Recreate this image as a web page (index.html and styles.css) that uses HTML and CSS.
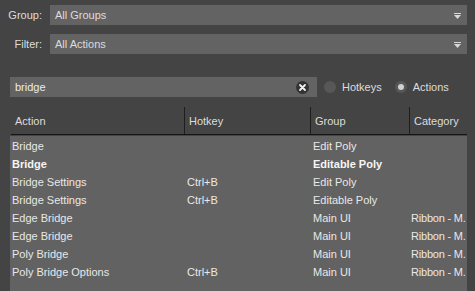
FILE: index.html
```html
<!DOCTYPE html>
<html lang="en">
<head>
  <meta charset="UTF-8">
  <title>Hotkey Editor</title>
  <link rel="stylesheet" href="styles.css">
</head>
<body>
  <div class="panel">
    <!-- Group / Filter dropdowns -->
    <div class="field">
      <label class="field-label">Group:</label>
      <div class="dropdown">
        <span>All Groups</span>
        <svg class="arrow" width="7" height="6" viewBox="0 0 7 6"><rect x="0" y="0" width="7" height="1" fill="#d8d8d8"/><path d="M0 2 H7 L3.5 6 Z" fill="#d8d8d8"/></svg>
      </div>
    </div>
    <div class="field">
      <label class="field-label">Filter:</label>
      <div class="dropdown">
        <span>All Actions</span>
        <svg class="arrow" width="7" height="6" viewBox="0 0 7 6"><rect x="0" y="0" width="7" height="1" fill="#d8d8d8"/><path d="M0 2 H7 L3.5 6 Z" fill="#d8d8d8"/></svg>
      </div>
    </div>

    <!-- Search -->
    <div class="search-row">
      <div class="search-box">
        <span>bridge</span>
        <svg class="clear" width="13" height="13" viewBox="0 0 13 13">
          <circle cx="6.5" cy="6.5" r="6.5" fill="#333"/>
          <path d="M4 4 L9 9 M9 4 L4 9" stroke="#f2f2f2" stroke-width="1.8" stroke-linecap="round"/>
        </svg>
      </div>
      <div class="radio"><span class="dot"></span>Hotkeys</div>
      <div class="radio"><span class="dot on"></span>Actions</div>
    </div>

    <!-- Results table -->
    <div class="table">
      <div class="head">
        <div class="col c1">Action</div>
        <div class="col c2">Hotkey</div>
        <div class="col c3">Group</div>
        <div class="col c4">Category</div>
      </div>
      <div class="body">
        <div class="row"><div class="c1">Bridge</div><div class="c2"></div><div class="c3">Edit Poly</div><div class="c4"></div></div>
        <div class="row bold"><div class="c1">Bridge</div><div class="c2"></div><div class="c3">Editable Poly</div><div class="c4"></div></div>
        <div class="row"><div class="c1">Bridge Settings</div><div class="c2">Ctrl+B</div><div class="c3">Edit Poly</div><div class="c4"></div></div>
        <div class="row"><div class="c1">Bridge Settings</div><div class="c2">Ctrl+B</div><div class="c3">Editable Poly</div><div class="c4"></div></div>
        <div class="row"><div class="c1">Edge Bridge</div><div class="c2"></div><div class="c3">Main UI</div><div class="c4">Ribbon - M.</div></div>
        <div class="row"><div class="c1">Edge Bridge</div><div class="c2"></div><div class="c3">Main UI</div><div class="c4">Ribbon - M.</div></div>
        <div class="row"><div class="c1">Poly Bridge</div><div class="c2"></div><div class="c3">Main UI</div><div class="c4">Ribbon - M.</div></div>
        <div class="row"><div class="c1">Poly Bridge Options</div><div class="c2">Ctrl+B</div><div class="c3">Main UI</div><div class="c4">Ribbon - M.</div></div>
      </div>
    </div>
  </div>
</body>
</html>
```

FILE: styles.css
```css
body {
  margin: 0;
  background: #444444;
  font-family: "Liberation Sans", Arial, sans-serif;
  font-size: 11px;
  color: #dcdcdc;
  height: 291px;
  overflow: hidden;
}
.panel {
  display: flex;
  flex-direction: column;
  height: 291px;
}
.field {
  display: flex;
  align-items: center;
  margin: 5px 8px 0 0;
  height: 20px;
}
.field + .field {
  margin-top: 9px;
}
.field-label {
  width: 42px;
  text-align: right;
  margin-right: 8px;
}
.dropdown {
  flex: 1;
  height: 20px;
  background: #636363;
  display: flex;
  align-items: center;
  justify-content: space-between;
  padding: 0 6px 0 5px;
  box-sizing: border-box;
}
.dropdown .arrow {
  margin-top: 1px;
}
.search-row {
  display: flex;
  align-items: center;
  margin: 23px 0 0 10px;
  height: 20px;
}
.search-box {
  width: 307px;
  height: 20px;
  background: #636363;
  display: flex;
  align-items: center;
  justify-content: space-between;
  padding: 0 8px 0 5px;
  box-sizing: border-box;
  color: #ececec;
}
.radio {
  display: flex;
  align-items: center;
  margin-left: 7px;
}
.radio + .radio {
  margin-left: 13px;
}
.dot {
  width: 12px;
  height: 12px;
  border-radius: 50%;
  background: #575757;
  margin-right: 6px;
  display: flex;
  align-items: center;
  justify-content: center;
}
.dot.on::after {
  content: "";
  width: 6px;
  height: 6px;
  border-radius: 50%;
  background: #d0d0d0;
}
.table {
  margin: 10px 8px 0 10px;
  flex: 1;
  display: flex;
  flex-direction: column;
}
.head {
  display: flex;
  height: 27px;
  border-bottom: 1px solid #151515;
  margin-left: 1px;
}
.head .col {
  display: flex;
  align-items: center;
  padding-left: 4px;
  box-sizing: border-box;
  border-right: 1px solid #1e1e1e;
}
.head .c1 { width: 174px; }
.head .c2 { width: 126px; }
.head .c3 { width: 99px; }
.head .c4 { border-right: none; flex: 1; }
.body {
  flex: 1;
  background: #626262;
  margin-top: 1px;
  padding-top: 1px;
  color: #e8e8e8;
}
.row {
  display: flex;
  height: 18px;
  align-items: center;
}
.row.bold {
  font-weight: bold;
  color: #f6f6f6;
}
.row div {
  padding-left: 2px;
  box-sizing: border-box;
  white-space: nowrap;
}
.row .c1 { width: 175px; }
.row .c2 { width: 126px; }
.row .c3 { width: 99px; }
.row .c4 {
  flex: 1;
  padding-left: 1px;
  letter-spacing: -0.2px;
}
```
